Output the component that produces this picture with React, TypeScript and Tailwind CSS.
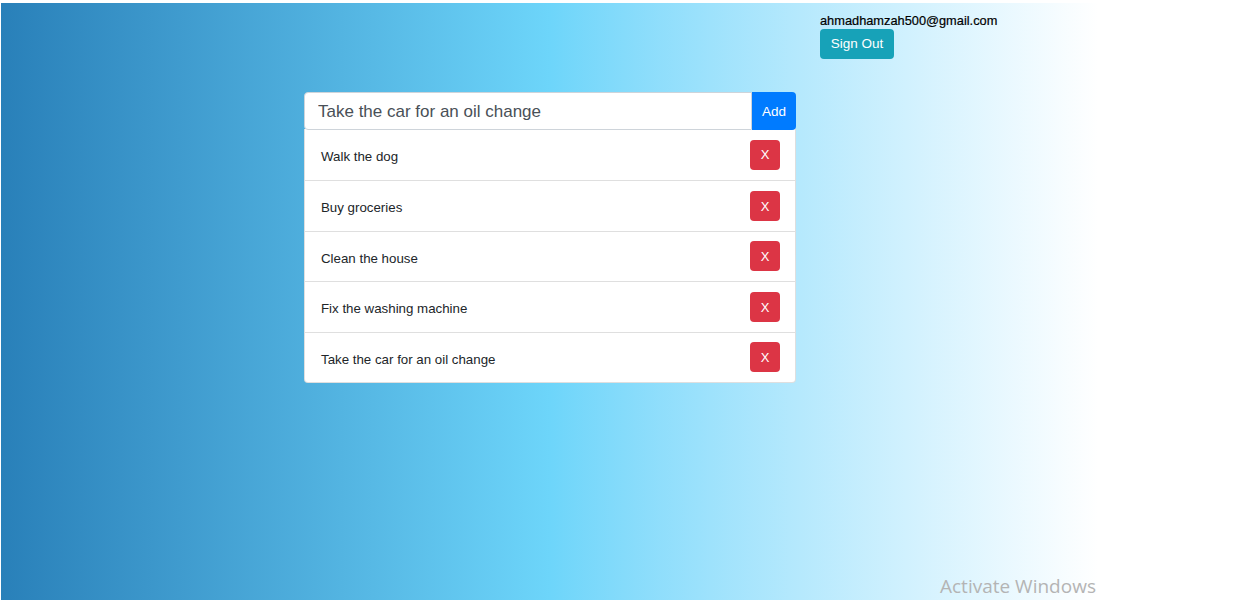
import { useState } from 'react';

const INITIAL = ['Walk the dog', 'Buy groceries', 'Clean the house', 'Fix the washing machine', 'Take the car for an oil change'];

export default function App() {
  const [todos, setTodos] = useState<string[]>(INITIAL);
  const [draft, setDraft] = useState('Take the car for an oil change');

  function addTodo() {
    if (!draft.trim()) return;
    setTodos((t) => [...t, draft.trim()]);
    setDraft('');
  }

  return (
    <div className="relative h-[600px] w-[1233px] bg-white pl-px pt-[3px] font-['Liberation_Sans',sans-serif] overflow-hidden">
      <div className="flex h-[597px] w-[1097px] items-start bg-gradient-to-r from-[#2980b9] via-[#6dd5fa] to-white">
        {/* --- todo card --- */}
        <div className="ml-[303px] mt-[89px] w-[492px]">
          <div className="flex h-[38px]">
            <input
              value={draft}
              onChange={(e) => setDraft(e.target.value)}
              className="min-w-0 flex-1 rounded-l bg-white px-[13px] pt-[2px] text-[17px] text-[#495057] outline-none border border-[#ced4da]"
            />
            <button onClick={addTodo} className="w-[44px] rounded-r bg-[#007bff] pt-[2px] text-[13.5px] text-white">Add</button>
          </div>
          <ul className="-mt-px rounded-b bg-white border border-black/[.125] border-t-0">
            {todos.map((t, i) => (
              <li key={i} className="flex h-[50.5px] items-center justify-between pl-4 pr-[15px] border-t border-black/[.125] first:border-t-0 first:h-[51px] text-[13.3px] text-[#212529]">
                <span className="pt-[5px]">{t}</span>
                <button
                  onClick={() => setTodos((s) => s.filter((_, j) => j !== i))}
                  className="flex h-[30px] w-[30px] items-center justify-center rounded bg-[#dc3545] pt-px text-[13px] text-white"
                >
                  X
                </button>
              </li>
            ))}
          </ul>
        </div>

        {/* --- user box --- */}
        <div className="ml-[24px] pt-[9px]">
          <div className="text-[12.8px] leading-[17px] text-black [-webkit-text-stroke:0.2px_black]">ahmadhamzah500@gmail.com</div>
          <button className="h-[30px] w-[74px] rounded bg-[#17a2b8] text-[13.5px] text-white">Sign Out</button>
        </div>
      </div>

      <div className="absolute left-[940px] top-[572px] font-['Open_Sans',sans-serif] text-[19px] text-[#b4b4b4]">Activate Windows</div>
    </div>
  );
}
